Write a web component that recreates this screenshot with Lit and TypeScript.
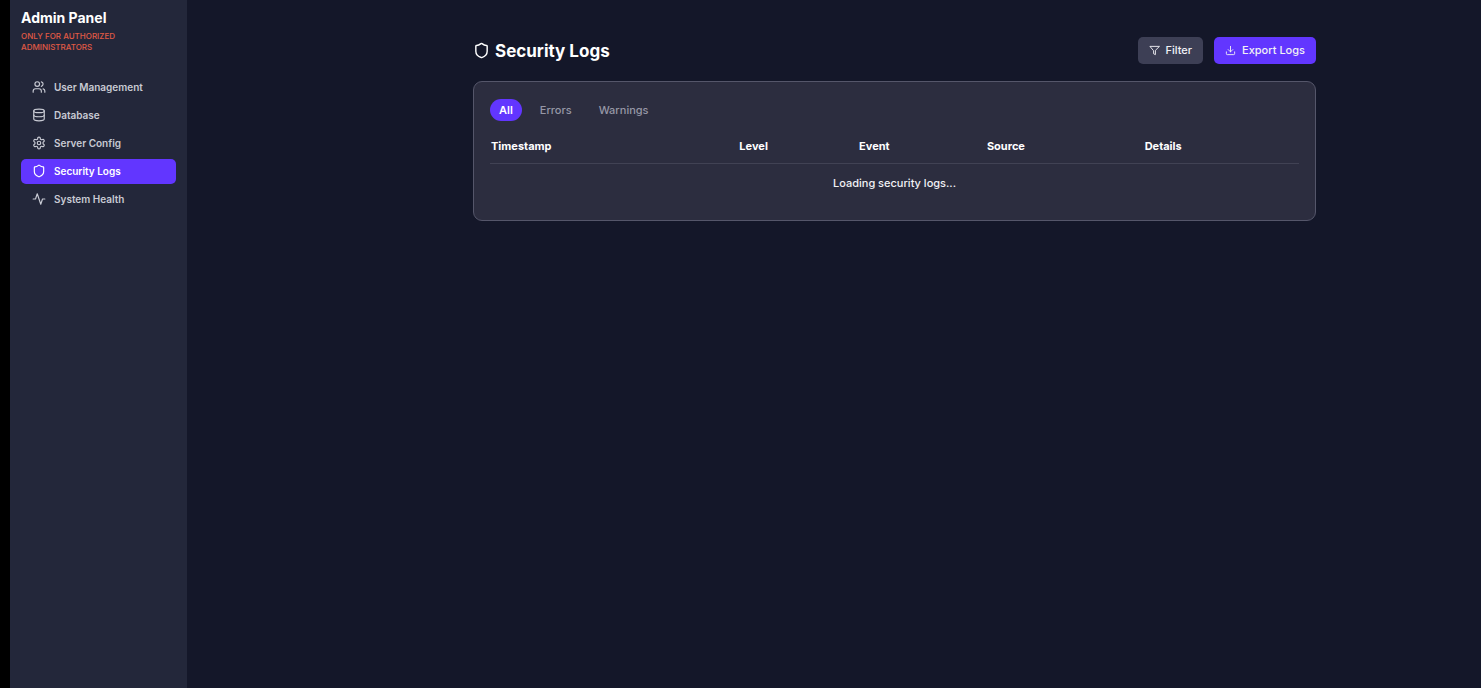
import { LitElement, html, css, svg } from "lit";
import { customElement, property, state } from "lit/decorators.js";
import { classMap } from "lit/directives/class-map.js";

const icons = {
  users: svg`<path d="M16 21v-2a4 4 0 0 0-4-4H6a4 4 0 0 0-4 4v2"/><circle cx="9" cy="7" r="4"/><path d="M22 21v-2a4 4 0 0 0-3-3.87"/><path d="M16 3.13a4 4 0 0 1 0 7.75"/>`,
  database: svg`<ellipse cx="12" cy="5" rx="9" ry="3"/><path d="M3 5v14a9 3 0 0 0 18 0V5"/><path d="M3 12a9 3 0 0 0 18 0"/>`,
  settings: svg`<path d="M12.22 2h-.44a2 2 0 0 0-2 2v.18a2 2 0 0 1-1 1.73l-.43.25a2 2 0 0 1-2 0l-.15-.08a2 2 0 0 0-2.73.73l-.22.38a2 2 0 0 0 .73 2.73l.15.1a2 2 0 0 1 1 1.72v.51a2 2 0 0 1-1 1.74l-.15.09a2 2 0 0 0-.73 2.73l.22.38a2 2 0 0 0 2.73.73l.15-.08a2 2 0 0 1 2 0l.43.25a2 2 0 0 1 1 1.73V20a2 2 0 0 0 2 2h.44a2 2 0 0 0 2-2v-.18a2 2 0 0 1 1-1.73l.43-.25a2 2 0 0 1 2 0l.15.08a2 2 0 0 0 2.73-.73l.22-.39a2 2 0 0 0-.73-2.73l-.15-.08a2 2 0 0 1-1-1.74v-.5a2 2 0 0 1 1-1.74l.15-.09a2 2 0 0 0 .73-2.73l-.22-.38a2 2 0 0 0-2.73-.73l-.15.08a2 2 0 0 1-2 0l-.43-.25a2 2 0 0 1-1-1.73V4a2 2 0 0 0-2-2z"/><circle cx="12" cy="12" r="3"/>`,
  shield: svg`<path d="M20 13c0 5-3.5 7.5-7.66 8.95a1 1 0 0 1-.67-.01C7.5 20.5 4 18 4 13V6a1 1 0 0 1 1-1c2 0 4.5-1.2 6.24-2.72a1.17 1.17 0 0 1 1.52 0C14.51 3.81 17 5 19 5a1 1 0 0 1 1 1z"/>`,
  activity: svg`<path d="M22 12h-4l-3 9L9 3l-3 9H2"/>`,
  filter: svg`<path d="M22 3H2l8 9.46V19l4 2v-8.54z"/>`,
  download: svg`<path d="M21 15v4a2 2 0 0 1-2 2H5a2 2 0 0 1-2-2v-4"/><path d="M7 10l5 5 5-5"/><path d="M12 15V3"/>`,
};

type IconName = keyof typeof icons;

@customElement("line-icon")
export class LineIcon extends LitElement {
  @property() name: IconName = "shield";

  static styles = css`
    :host {
      display: block;
      flex: none;
      width: 14px;
      height: 14px;
    }
    .glyph {
      display: block;
      width: 100%;
      height: 100%;
      fill: none;
      stroke: currentColor;
      stroke-width: 2;
      stroke-linecap: round;
      stroke-linejoin: round;
    }
  `;

  render() {
    return html`<svg class="glyph" viewBox="0 0 24 24" aria-hidden="true">${icons[this.name]}</svg>`;
  }
}

const sections: { label: string; icon: IconName }[] = [
  { label: "User Management", icon: "users" },
  { label: "Database", icon: "database" },
  { label: "Server Config", icon: "settings" },
  { label: "Security Logs", icon: "shield" },
  { label: "System Health", icon: "activity" },
];

@customElement("admin-sidebar")
export class AdminSidebar extends LitElement {
  @property() current = "";

  static styles = css`
    :host {
      display: block;
      box-sizing: border-box;
      padding: 8px 11px;
      background: #23273a;
    }
    .title {
      margin: 0;
      font-size: 14px;
      line-height: 20px;
      font-weight: 700;
      color: #fff;
    }
    .notice {
      margin: 3px 0 22px;
      font-size: 8px;
      line-height: 11px;
      font-weight: 500;
      color: #e05a45;
      text-transform: uppercase;
    }
    .nav {
      display: flex;
      flex-direction: column;
      gap: 3px;
    }
    .link {
      display: flex;
      align-items: center;
      gap: 8px;
      box-sizing: border-box;
      height: 25px;
      padding: 0 11px 1px;
      border-radius: 5px;
      font-size: 10px;
      font-weight: 600;
      color: #c8cad3;
      text-decoration: none;
    }
    .link.active {
      background: #6236ff;
      color: #fff;
    }
  `;

  render() {
    return html`
      <h2 class="title">Admin Panel</h2>
      <p class="notice">Only for authorized administrators</p>
      <nav class="nav" aria-label="Admin sections">
        ${sections.map(
          ({ label, icon }) => html`<a class=${classMap({ link: true, active: label === this.current })} href="#"
            ><line-icon name=${icon}></line-icon>${label}</a
          >`
        )}
      </nav>
    `;
  }
}

@customElement("security-logs")
export class SecurityLogs extends LitElement {
  @state() private tab = "All";

  static styles = css`
    :host {
      display: block;
      color: #fff;
    }
    .header {
      display: flex;
      align-items: center;
      justify-content: space-between;
      margin-bottom: 17px;
    }
    .heading {
      display: flex;
      align-items: center;
      gap: 5px;
      margin: 0;
      font-size: 17px;
      line-height: 27px;
      font-weight: 700;
    }
    .heading-icon {
      width: 17px;
      height: 17px;
    }
    .heading-text {
      padding-top: 2px;
      line-height: 25px;
    }
    .actions {
      display: flex;
      gap: 11px;
    }
    .button {
      display: flex;
      align-items: center;
      gap: 6px;
      height: 27px;
      padding: 0 11px;
      border: 0;
      border-radius: 5px;
      background: #3d3f55;
      color: #f1f1f5;
      font: 500 11px/17px Inter, sans-serif;
    }
    .button.primary {
      background: #6236ff;
    }
    .button-icon {
      width: 11px;
      height: 11px;
    }
    .card {
      padding: 17px 16px;
      border: 1px solid #55566a;
      border-radius: 9px;
      background: #2c2d3f;
    }
    .tabs {
      display: flex;
      gap: 9px;
      margin-bottom: 8px;
    }
    .tab {
      height: 22px;
      padding: 0 9px;
      border: 0;
      border-radius: 11px;
      background: transparent;
      color: #9697a6;
      font: 500 11px/22px Inter, sans-serif;
    }
    .tab.active {
      background: #6236ff;
      color: #fff;
      font-weight: 600;
    }
    .table {
      width: 100%;
      table-layout: fixed;
      border-collapse: separate;
      border-spacing: 0;
      font-size: 11px;
      line-height: 17px;
    }
    .col-timestamp {
      width: 30.7%;
    }
    .col-level {
      width: 14.8%;
    }
    .col-event {
      width: 15.8%;
    }
    .col-source {
      width: 19.5%;
    }
    .head {
      padding: 9px 1px 8px;
      border-bottom: 1px solid #414254;
      text-align: left;
      font-weight: 700;
    }
    .message {
      padding: 11px 1px;
      text-align: center;
      color: #f1f1f5;
      font-weight: 500;
    }
  `;

  render() {
    return html`
      <header class="header">
        <h1 class="heading">
          <line-icon class="heading-icon" name="shield"></line-icon><span class="heading-text">Security Logs</span>
        </h1>
        <div class="actions">
          <button class="button" type="button"><line-icon class="button-icon" name="filter"></line-icon>Filter</button>
          <button class="button primary" type="button">
            <line-icon class="button-icon" name="download"></line-icon>Export Logs
          </button>
        </div>
      </header>
      <section class="card">
        <div class="tabs" role="tablist">
          ${["All", "Errors", "Warnings"].map(
            (name) => html`<button
              class=${classMap({ tab: true, active: name === this.tab })}
              type="button"
              role="tab"
              aria-selected=${name === this.tab ? "true" : "false"}
              @click=${() => (this.tab = name)}
            >${name}</button>`
          )}
        </div>
        <table class="table">
          <colgroup>
            <col class="col-timestamp" />
            <col class="col-level" />
            <col class="col-event" />
            <col class="col-source" />
            <col />
          </colgroup>
          <thead>
            <tr>
              ${["Timestamp", "Level", "Event", "Source", "Details"].map(
                (name) => html`<th class="head" scope="col">${name}</th>`
              )}
            </tr>
          </thead>
          <tbody>
            <tr>
              <td class="message" colspan="5">Loading security logs...</td>
            </tr>
          </tbody>
        </table>
      </section>
    `;
  }
}

@customElement("app-root")
export class AppRoot extends LitElement {
  static styles = css`
    :host {
      display: flex;
      box-sizing: border-box;
      min-height: 100vh;
      border-left: 10px solid #000;
      background: #141729;
      font-family: Inter, sans-serif;
    }
    .sidebar {
      flex: 0 0 177px;
    }
    .main {
      flex: 1;
      min-width: 0;
      padding: 37px 0 37px 121px;
    }
    .content {
      max-width: 843px;
      margin: 0 auto;
    }
  `;

  render() {
    return html`
      <admin-sidebar class="sidebar" current="Security Logs"></admin-sidebar>
      <main class="main"><security-logs class="content"></security-logs></main>
    `;
  }
}
